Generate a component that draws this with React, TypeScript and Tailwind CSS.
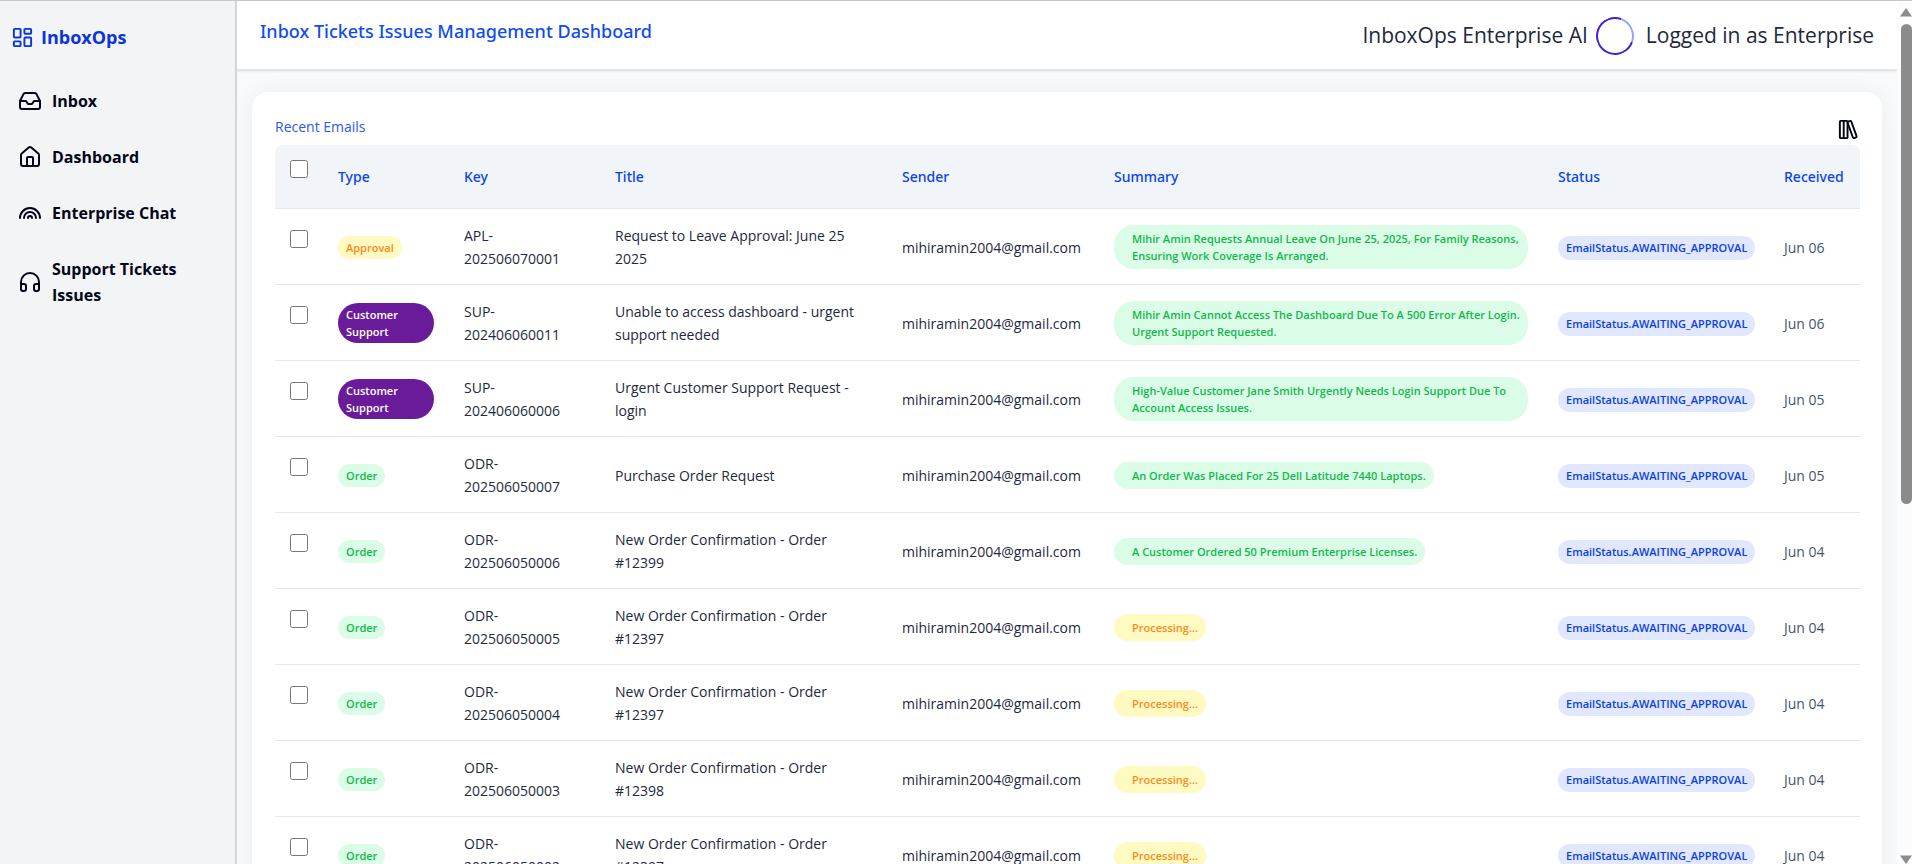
import { Headphones, House, Inbox, LayoutDashboard, LibraryBig, Rainbow } from 'lucide-react';

interface Email {
  type: 'Approval' | 'Customer Support' | 'Order';
  key: string;
  title: string;
  summary: string | null;
  received: string;
}

const SENDER = 'mihiramin2004@gmail.com';
const STATUS = 'EmailStatus.AWAITING_APPROVAL';

const emails: Email[] = [
  {
    type: 'Approval',
    key: 'APL-202506070001',
    title: 'Request to Leave Approval: June 25 2025',
    summary: 'Mihir Amin Requests Annual Leave On June 25, 2025, For Family Reasons, Ensuring Work Coverage Is Arranged.',
    received: 'Jun 06',
  },
  {
    type: 'Customer Support',
    key: 'SUP-202406060011',
    title: 'Unable to access dashboard - urgent support needed',
    summary: 'Mihir Amin Cannot Access The Dashboard Due To A 500 Error After Login. Urgent Support Requested.',
    received: 'Jun 06',
  },
  {
    type: 'Customer Support',
    key: 'SUP-202406060006',
    title: 'Urgent Customer Support Request - login',
    summary: 'High-Value Customer Jane Smith Urgently Needs Login Support Due To Account Access Issues.',
    received: 'Jun 05',
  },
  {
    type: 'Order',
    key: 'ODR-202506050007',
    title: 'Purchase Order Request',
    summary: 'An Order Was Placed For 25 Dell Latitude 7440 Laptops.',
    received: 'Jun 05',
  },
  {
    type: 'Order',
    key: 'ODR-202506050006',
    title: 'New Order Confirmation - Order #12399',
    summary: 'A Customer Ordered 50 Premium Enterprise Licenses.',
    received: 'Jun 04',
  },
  { type: 'Order', key: 'ODR-202506050005', title: 'New Order Confirmation - Order #12397', summary: null, received: 'Jun 04' },
  { type: 'Order', key: 'ODR-202506050004', title: 'New Order Confirmation - Order #12397', summary: null, received: 'Jun 04' },
  { type: 'Order', key: 'ODR-202506050003', title: 'New Order Confirmation - Order #12398', summary: null, received: 'Jun 04' },
  { type: 'Order', key: 'ODR-202506050002', title: 'New Order Confirmation - Order #12397', summary: null, received: 'Jun 04' },
];

const typeStyles = {
  Approval: 'bg-[#fff9c2] text-[#fb8c1e]',
  'Customer Support': 'bg-[#6a1b9a] text-white',
  Order: 'bg-green-100 text-[#12b84e]',
};

const navItems = [
  { label: 'Inbox', icon: Inbox },
  { label: 'Dashboard', icon: House },
  { label: 'Enterprise Chat', icon: Rainbow },
  { label: 'Support Tickets Issues', icon: Headphones },
];

function Sidebar() {
  return (
    <aside className="w-[237px] shrink-0 border-r-2 border-gray-300 bg-gray-100">
      <a href="#" className="flex items-center gap-[7px] px-[11px] pt-6 text-lg font-bold leading-6 text-[#0b35d8]">
        <LayoutDashboard size={23} strokeWidth={2} />
        InboxOps
      </a>
      <nav className="mt-[31px] flex flex-col gap-[14px] px-4">
        {navItems.map(({ label, icon: Icon }) => (
          <a key={label} href="#" className="flex items-center gap-[10px] px-[2px] py-2 font-bold leading-[26px] text-slate-950">
            <Icon size={24} strokeWidth={2} className="shrink-0" />
            <span>{label}</span>
          </a>
        ))}
      </nav>
    </aside>
  );
}

function Header() {
  return (
    <header className="flex h-[69px] shrink-0 justify-between border-b border-gray-200 bg-white px-[23px] shadow-sm">
      <h1 className="pt-[14px] font-['Noto_Sans',sans-serif] text-lg font-medium leading-8 text-[#0f4df0]">
        Inbox Tickets Issues Management Dashboard
      </h1>
      <div className="flex items-center gap-2 pt-0.5 text-[21px] text-slate-800">
        <span>InboxOps Enterprise AI</span>
        <div className="mr-1 size-[38px] rotate-[-25deg] rounded-full border-2 border-[#3b1fe0] border-r-[#93a5ff]" />
        <span>Logged in as Enterprise</span>
      </div>
    </header>
  );
}

function EmailRow({ email }: { email: Email }) {
  return (
    <tr className="h-[76px] border-b border-slate-200">
      <td className="px-[15px] pt-[21px] align-top">
        <input type="checkbox" aria-label={`Select ${email.key}`} className="block size-[18px]" />
      </td>
      <td className="pl-4 pr-[14px] pt-0.5">
        <span className={`inline-block rounded-[20px] px-2 py-[3px] text-[11px] font-semibold leading-[17px] ${typeStyles[email.type]}`}>
          {email.type}
        </span>
      </td>
      <td className="px-4 pt-0.5">{email.key}</td>
      <td className="px-4 pt-0.5">{email.title}</td>
      <td className="px-4 pt-0.5">{SENDER}</td>
      <td className="pl-4 pr-[14px] pt-0.5">
        <span
          className={`inline-block rounded-[20px] py-[5px] pl-[18px] pr-2 text-[11px] font-semibold leading-[17px] ${
            email.summary ? 'bg-green-100 text-[#12b84e]' : 'bg-[#fff9c2] text-[#fb8c1e]'
          }`}
        >
          {email.summary ?? 'Processing...'}
        </span>
      </td>
      <td className="px-4 pt-0.5">
        <span className="inline-block whitespace-nowrap rounded-full bg-indigo-100 px-2 py-1 text-[11px] font-semibold leading-4 text-[#0b3fe0]">
          {STATUS}
        </span>
      </td>
      <td className="whitespace-nowrap px-4 pt-0.5 text-slate-600">{email.received}</td>
    </tr>
  );
}

function EmailTable() {
  return (
    <table className="w-full table-fixed text-left text-sm leading-[23px] text-slate-800">
      <colgroup>
        <col className="w-[47px]" />
        <col className="w-[126px]" />
        <col className="w-[151px]" />
        <col className="w-[287px]" />
        <col className="w-[212px]" />
        <col />
        <col className="w-[226px]" />
        <col className="w-[92px]" />
      </colgroup>
      <thead>
        <tr className="h-[63px] border-b border-slate-200 bg-slate-100 font-['Noto_Sans',sans-serif] text-[#0b43ee]">
          <th className="rounded-tl-lg px-[15px] pt-[15px] align-top">
            <input type="checkbox" aria-label="Select all emails" className="block size-[18px]" />
          </th>
          {['Type', 'Key', 'Title', 'Sender', 'Summary', 'Status', 'Received'].map((name) => (
            <th key={name} className="px-4 font-medium last:rounded-tr-lg">
              {name}
            </th>
          ))}
        </tr>
      </thead>
      <tbody>
        {emails.map((email) => (
          <EmailRow key={email.key} email={email} />
        ))}
      </tbody>
    </table>
  );
}

// Always-visible scroll indicator at the window's right edge
function ScrollTrack() {
  return (
    <div className="flex w-[15px] shrink-0 flex-col items-end bg-[#fcfcfc] pt-[7px]">
      <svg width="12" height="9" viewBox="0 0 12 9" fill="#8b8b8b">
        <path d="M6 0 12 8.5H0Z" />
      </svg>
      <div className="mt-[7px] h-[480px] w-[11px] rounded-full bg-[#8b8b8b]" />
      <svg width="12" height="9" viewBox="0 0 12 9" fill="#8b8b8b" className="mt-auto">
        <path d="M0 .5h12L6 9Z" />
      </svg>
    </div>
  );
}

export default function App() {
  return (
    <div className="flex h-screen overflow-hidden border-t border-[#c8c8cc] font-['Open_Sans',sans-serif]">
      <Sidebar />
      <div className="flex min-w-0 flex-1 flex-col overflow-hidden bg-slate-50">
        <Header />
        <main className="px-[15px] pt-[22px]">
          <section className="rounded-2xl bg-white pl-[23px] pr-[22px] pt-6 shadow-[0_0_24px_rgba(15,23,42,0.06)]">
            <div className="flex h-[29px] items-start justify-between">
              <h2 className="text-sm leading-[22px] text-[#2b59ee]">Recent Emails</h2>
              <button type="button" aria-label="Library" className="pt-0.5 text-slate-950">
                <LibraryBig size={23} />
              </button>
            </div>
            <EmailTable />
          </section>
        </main>
      </div>
      <ScrollTrack />
    </div>
  );
}
